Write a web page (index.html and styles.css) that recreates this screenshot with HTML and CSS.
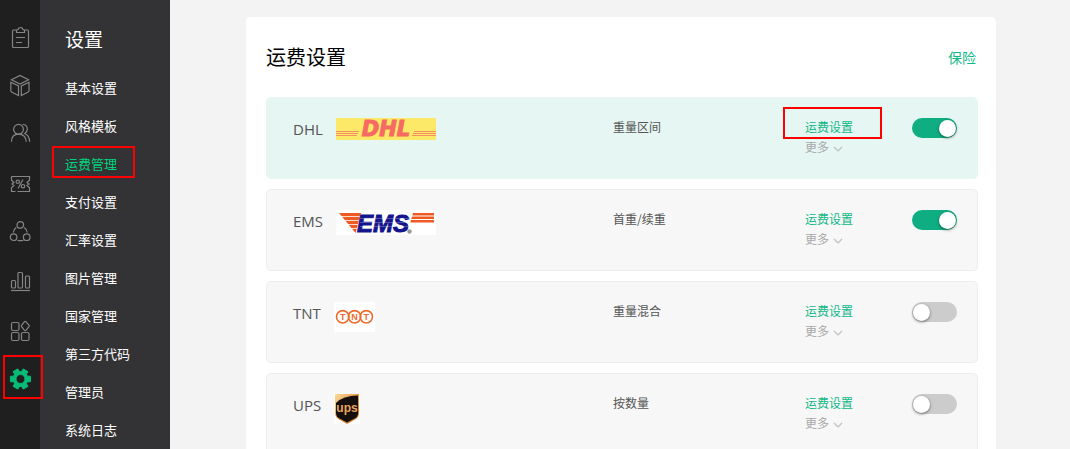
FILE: index.html
```html
<!DOCTYPE html>
<html lang="zh-CN">
<head>
<meta charset="utf-8">
<meta name="viewport" content="width=device-width, initial-scale=1">
<title>运费设置</title>
<link rel="stylesheet" href="styles.css">
</head>
<body>
<div class="app">
  <nav class="rail" aria-label="主导航">
    <a class="rail-link" href="#orders" aria-label="订单"><svg class="rail-icon" viewBox="0 0 24 24"><path d="M8.500 5H5.500a1 1 0 0 0-1 1v15.500a1 1 0 0 0 1 1h14a1 1 0 0 0 1-1V6a1 1 0 0 0-1-1h-3M8.500 7.500V5.500Q8.500 4.500 10 4.500 10.500 2.500 12.500 2.500T15 4.500q1.500 0 1.500 1v2zM8 12.500h9M8 17.500h6"/></svg></a>
    <a class="rail-link" href="#products" aria-label="产品"><svg class="rail-icon" viewBox="0 0 24 24"><path d="M3.500 5.800 12 1.500l8.500 4.300L12 10zM2.800 8.300 10.500 12v9.500L4 18.200q-1.200-.6-1.200-1.800zM21 8.300 13.300 12v9.500l6.500-3.300q1.200-.6 1.200-1.800z"/></svg></a>
    <a class="rail-link" href="#customers" aria-label="客户"><svg class="rail-icon" viewBox="0 0 24 24"><circle cx="10.500" cy="6.300" r="4.900"/><path d="M3.500 18.800c0-4.500 2.500-7.600 7-7.600s7.300 3.100 7.800 7.600M14.500 1.500c3 0 4.800 2 4.800 4.700 0 2-1 3.400-2.500 4.300 3.200 1.500 4.700 4.300 4.900 8.300"/></svg></a>
    <a class="rail-link" href="#coupons" aria-label="优惠"><svg class="rail-icon" viewBox="0 0 24 24"><path d="M3.500 4.500h18v3.700L19 10.500l2 1.500-2 1.500 2.500 2.300v3.700h-12M7.500 19.500h-4v-3.700L6 13.500 4 12l2-1.500-2.500-2.300V4.500"/><circle cx="9.800" cy="9.800" r="1.700"/><circle cx="15" cy="14.200" r="1.700"/><path d="m15 7.500-5 9"/></svg></a>
    <a class="rail-link" href="#channels" aria-label="渠道"><svg class="rail-icon" viewBox="0 0 24 24"><circle cx="12.300" cy="3.900" r="3.300"/><circle cx="5.600" cy="16.200" r="3.300"/><circle cx="18.700" cy="16.200" r="3.300"/><path d="M8.300 6.500Q5.500 8.300 5.300 11.500M16.200 6.500q2.800 1.800 3 5M9.500 19.200q3 1 6 0"/></svg></a>
    <a class="rail-link" href="#reports" aria-label="统计"><svg class="rail-icon" viewBox="0 0 24 24"><rect x="3.500" y="10.500" width="4" height="7.500" rx="1"/><rect x="10" y="2.500" width="4.500" height="15.500" rx="1"/><rect x="17.500" y="6" width="4" height="12" rx="1"/><path d="M3 20.500h19"/></svg></a>
    <a class="rail-link" href="#apps" aria-label="应用"><svg class="rail-icon" viewBox="0 0 24 24"><rect x="3.500" y="3.500" width="7.500" height="8" rx="1.500"/><rect x="3.500" y="13.500" width="7.500" height="8" rx="1.500"/><rect x="13.500" y="13.500" width="7.500" height="8" rx="1.500"/><path d="m16.300 2.800-2.700 3.500q-.5.700 0 1.400l2.700 3.500q.9 1 1.800 0l2.900-3.500q.5-.7 0-1.400l-2.900-3.500q-.9-1-1.800 0z"/></svg></a>
    <a class="rail-link marked" href="#settings" aria-label="设置"><svg class="rail-icon rail-icon-on" viewBox="0 0 24 24"><path fill-rule="evenodd" d="M19.500 8.200 22.600 8.300V13.700L19.500 13.800 18.400 15.600 19.900 18.400 15.200 21.100 13.500 18.400H11.500L9.800 21.100 5.100 18.400 6.600 15.600 5.500 13.800 2.400 13.700V8.300L5.500 8.200 6.600 6.400 5.100 3.600 9.800.9 11.500 3.600H13.500L15.200.9 19.900 3.600 18.400 6.400zM12.500 6.500a4.500 4.500 0 1 0 0 9 4.500 4.500 0 0 0 0-9z"/></svg></a>
  </nav>

  <aside class="sidebar">
    <h2 class="sidebar-title">设置</h2>
    <nav class="menu" aria-label="设置">
      <a class="menu-link" href="#basic">基本设置</a>
      <a class="menu-link" href="#theme">风格模板</a>
      <a class="menu-link menu-link-on marked" href="#shipping" aria-current="page">运费管理</a>
      <a class="menu-link" href="#payment">支付设置</a>
      <a class="menu-link" href="#rates">汇率设置</a>
      <a class="menu-link" href="#images">图片管理</a>
      <a class="menu-link" href="#countries">国家管理</a>
      <a class="menu-link" href="#scripts">第三方代码</a>
      <a class="menu-link" href="#admins">管理员</a>
      <a class="menu-link" href="#logs">系统日志</a>
    </nav>
  </aside>

  <main class="main">
    <section class="card">
      <header class="card-head">
        <h1 class="card-title">运费设置</h1>
        <a class="card-link" href="#insurance">保险</a>
      </header>
      <ul class="carriers">
        <li class="carrier carrier-on">
          <div class="brand">
            <label class="brand-name" for="dhl">DHL</label>
            <svg class="logo" width="100" height="22" viewBox="0 0 100 22" aria-hidden="true">
              <rect width="100" height="22" fill="#fce967"/>
              <path stroke="#f69060" stroke-width="1" d="M0 13.500h23M0 15.500h22M0 17.500h21M78 13.500h22M77 15.500h23M76 17.500h24"/>
              <text class="logo-dhl" x="50" y="18" text-anchor="middle">DHL</text>
            </svg>
          </div>
          <span class="mode">重量区间</span>
          <div class="controls">
            <div class="actions">
              <a class="action marked" href="#dhl-rates">运费设置</a>
              <button class="more" type="button">更多<svg class="chevron" viewBox="0 0 10 6"><path d="M1 1l4 4 4-4"/></svg></button>
            </div>
            <input class="switch" id="dhl" type="checkbox" role="switch" checked>
          </div>
        </li>
        <li class="carrier">
          <div class="brand">
            <label class="brand-name" for="ems">EMS</label>
            <svg class="logo" width="100" height="25" viewBox="0 0 100 25" aria-hidden="true">
              <rect width="100" height="25" fill="#fff"/>
              <path fill="#ee5b22" d="M3 3h22L19.500 23z"/>
              <path stroke="#fff" stroke-width=".8" d="M3 6.500h24M3 10.500h24M3 14.500h24M3 18.500h24"/>
              <path fill="#ee5b22" d="M77 3h21v2.500H76.300zM76 6.500h22V9H75.300zM75 10h23v2.500H74.300z"/>
              <text class="logo-ems" x="47" y="22" text-anchor="middle">EMS</text>
              <path stroke="#fff" stroke-width="1" d="M24 8.500h49M24 12.500h49M24 16.500h49" opacity=".25"/>
              <circle cx="73.500" cy="21.500" r="2.200" fill="#999"/>
            </svg>
          </div>
          <span class="mode">首重/续重</span>
          <div class="controls">
            <div class="actions">
              <a class="action" href="#ems-rates">运费设置</a>
              <button class="more" type="button">更多<svg class="chevron" viewBox="0 0 10 6"><path d="M1 1l4 4 4-4"/></svg></button>
            </div>
            <input class="switch" id="ems" type="checkbox" role="switch" checked>
          </div>
        </li>
        <li class="carrier">
          <div class="brand">
            <label class="brand-name" for="tnt">TNT</label>
            <svg class="logo" width="41" height="30" viewBox="0 0 41 30" aria-hidden="true">
              <rect width="41" height="30" fill="#fff"/>
              <g fill="none" stroke="#ec6b2b" stroke-width="1.600"><circle cx="8.700" cy="14.800" r="6.200"/><circle cx="20.600" cy="14.800" r="6.200"/><circle cx="32.300" cy="14.800" r="6.200"/></g>
              <g class="logo-tnt" text-anchor="middle"><text x="8.700" y="18">T</text><text x="20.600" y="18">N</text><text x="32.300" y="18">T</text></g>
            </svg>
          </div>
          <span class="mode">重量混合</span>
          <div class="controls">
            <div class="actions">
              <a class="action" href="#tnt-rates">运费设置</a>
              <button class="more" type="button">更多<svg class="chevron" viewBox="0 0 10 6"><path d="M1 1l4 4 4-4"/></svg></button>
            </div>
            <input class="switch" id="tnt" type="checkbox" role="switch">
          </div>
        </li>
        <li class="carrier">
          <div class="brand">
            <label class="brand-name" for="ups">UPS</label>
            <svg class="logo" width="26" height="30" viewBox="0 0 26 30" aria-hidden="true">
              <defs>
                <linearGradient id="gold" x1="0" y1="0" x2="1" y2="1"><stop offset="0" stop-color="#f8dc9c"/><stop offset=".5" stop-color="#e69a45"/><stop offset="1" stop-color="#c9661c"/></linearGradient>
              </defs>
              <rect width="26" height="30" fill="#fff"/>
              <path fill="url(#gold)" d="M1 0h24v19q0 4-4 6.500L13 30l-8-4.500Q1 23 1 19z"/>
              <path fill="#15100d" d="M2 9Q9 1.500 24 1.500V19q0 3.500-3.500 5.500L13 28.500 5.500 24.500Q2 22.500 2 19z"/>
              <text class="logo-ups" x="13" y="18" text-anchor="middle">ups</text>
            </svg>
          </div>
          <span class="mode">按数量</span>
          <div class="controls">
            <div class="actions">
              <a class="action" href="#ups-rates">运费设置</a>
              <button class="more" type="button">更多<svg class="chevron" viewBox="0 0 10 6"><path d="M1 1l4 4 4-4"/></svg></button>
            </div>
            <input class="switch" id="ups" type="checkbox" role="switch">
          </div>
        </li>
      </ul>
    </section>
  </main>
</div>
</body>
</html>
```
FILE: styles.css
```css
* {
  box-sizing: border-box;
}

body {
  margin: 0;
  background: #f3f3f3;
  font-family: "Noto Sans CJK SC", sans-serif;
  font-size: 12px;
  line-height: 20px;
  color: #555;
}

a {
  text-decoration: none;
}

.app {
  display: flex;
  height: 100vh;
  overflow: hidden;
}

/* Icon rail */
.rail {
  flex: none;
  width: 40px;
  padding-top: 25px;
  display: flex;
  flex-direction: column;
  align-items: center;
  gap: 25px;
  background: #1f1f1f;
}

.rail-link {
  flex: none;
  display: block;
  width: 24px;
  height: 24px;
}

.rail-icon {
  display: block;
  width: 24px;
  height: 24px;
  fill: none;
  stroke: #858585;
  stroke-width: 1.2;
}

.rail-icon-on {
  fill: #08bb77;
  stroke: #08bb77;
  stroke-width: 1;
  stroke-linejoin: round;
}

/* Highlight frames */
.marked {
  position: relative;
}

.marked::after {
  content: "";
  position: absolute;
  z-index: 1;
  border: 2px solid #f00;
  pointer-events: none;
}

.rail-link.marked::after {
  inset: -13px -11px -7px -5px;
}

.menu-link.marked::after {
  inset: 1px -18px 5px -13px;
}

.action.marked::after {
  inset: -10px -29px -2px -22px;
}

/* Settings menu */
.sidebar {
  flex: none;
  width: 130px;
  padding: 27px 0 0 25px;
  background: #333335;
}

.sidebar-title {
  margin: 0 0 18px;
  font-size: 19px;
  line-height: 24px;
  font-weight: 400;
  color: #fff;
}

.menu {
  display: flex;
  flex-direction: column;
  align-items: flex-start;
}

.menu-link {
  font-size: 13px;
  line-height: 38px;
  color: #fff;
}

.menu-link-on {
  color: #00d27f;
}

/* Content */
.main {
  flex: 1;
  min-width: 0;
  padding: 17px 74px 0 76px;
}

.card {
  padding: 0 18px 20px 20px;
  border-radius: 5px;
  background: #fff;
}

.card-head {
  display: flex;
  align-items: center;
  justify-content: space-between;
  height: 80px;
  padding-right: 2px;
}

.card-title {
  margin: 0;
  font-size: 20px;
  line-height: 28px;
  font-weight: 400;
  color: #000;
}

.card-link {
  font-size: 14px;
  color: #0fb888;
}

.carriers {
  display: flex;
  flex-direction: column;
  gap: 10px;
  margin: 0;
  padding: 0;
  list-style: none;
}

.carrier {
  display: grid;
  grid-template-columns: minmax(0, 40fr) minmax(0, 24fr) minmax(0, 19fr);
  align-items: start;
  min-height: 82px;
  padding: 19px 20px 20px 26px;
  border: 1px solid #ededed;
  border-radius: 5px;
  background: #f7f7f7;
}

.carrier-on {
  border-color: #e6f6f3;
  background: #e6f6f3;
}

.brand {
  display: flex;
  align-items: flex-start;
  gap: 13px;
}

.brand-name {
  font-family: "Open Sans", "Noto Sans CJK SC", sans-serif;
  font-size: 15px;
  line-height: 24px;
}

.logo {
  flex: none;
  display: block;
  margin-top: 1px;
  overflow: visible;
}

.logo-dhl {
  font: italic bold 21px "DejaVu Sans", sans-serif;
  fill: #f76a63;
  stroke: #f76a63;
}

.logo-ems {
  font: italic bold 24px "Liberation Sans", sans-serif;
  fill: #14148c;
  stroke: #14148c;
}

.logo-tnt {
  font: bold 9px "Liberation Sans", sans-serif;
  fill: #ec6b2b;
}

.logo-ups {
  font: bold 12px "Liberation Sans", sans-serif;
  fill: #eba55c;
}

.controls {
  display: flex;
  align-items: flex-start;
  justify-content: space-between;
}

.actions {
  display: flex;
  flex-direction: column;
  align-items: flex-start;
}

.action {
  color: #0fb888;
}

.more {
  display: flex;
  align-items: center;
  gap: 4px;
  padding: 0;
  border: 0;
  background: none;
  font: inherit;
  color: #a8a8a8;
}

.chevron {
  width: 10px;
  height: 6px;
  margin-top: 3px;
  fill: none;
  stroke: #bfbfbf;
  stroke-width: 1.2;
}

.switch {
  appearance: none;
  flex: none;
  display: flex;
  align-items: center;
  width: 45px;
  height: 20px;
  margin: 1px 0 0;
  padding: 0 1px;
  border-radius: 10px;
  background: #ccc;
}

.switch::before {
  content: "";
  width: 17px;
  height: 17px;
  border-radius: 50%;
  background: #fff;
  box-shadow: 0 1px 3px rgba(0, 0, 0, 0.5);
}

.switch:checked {
  justify-content: flex-end;
  background: #0fae82;
}
```
